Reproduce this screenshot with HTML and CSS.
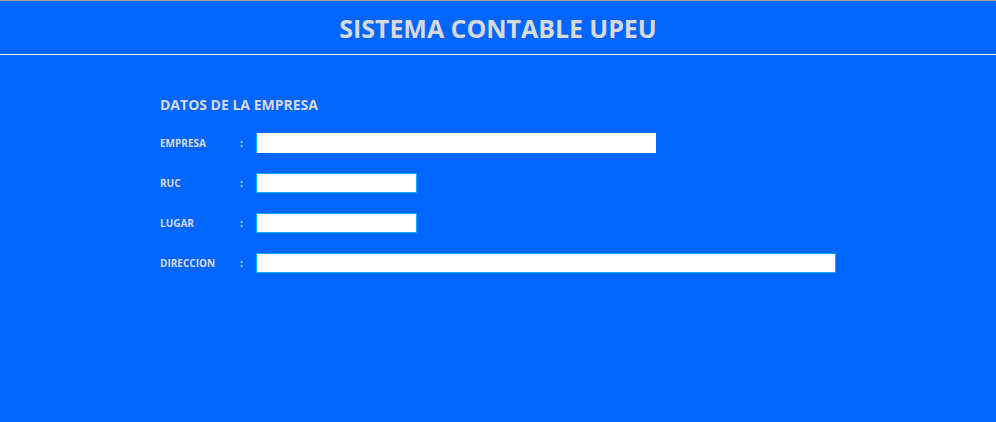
FILE: index.html
```html
<!DOCTYPE html>
<html lang="es">
<head>
<meta charset="utf-8">
<title>Sistema Contable UPEU</title>
<link rel="stylesheet" href="styles.css">
</head>
<body>
<header class="header">
  <h1 class="title">SISTEMA CONTABLE UPEU</h1>
</header>
<main class="content">
  <h2 class="section-title">DATOS DE LA EMPRESA</h2>
  <div class="form">
    <div class="row">
      <span class="label">EMPRESA</span><span class="colon">:</span>
      <div class="field field-empresa"></div>
    </div>
    <div class="row">
      <span class="label">RUC</span><span class="colon">:</span>
      <div class="field field-short"></div>
    </div>
    <div class="row">
      <span class="label">LUGAR</span><span class="colon">:</span>
      <div class="field field-short"></div>
    </div>
    <div class="row">
      <span class="label">DIRECCION</span><span class="colon">:</span>
      <div class="field field-long"></div>
    </div>
  </div>
</main>
</body>
</html>
```
FILE: styles.css
```css
html, body {
  margin: 0;
  padding: 0;
}
body {
  background: #0066ff;
  width: 996px;
  height: 422px;
  overflow: hidden;
  font-family: "Open Sans", "Liberation Sans", sans-serif;
  color: #d9d9d9;
  border-top: 1px solid #9a9ea6;
  box-sizing: border-box;
}
.header {
  height: 53px;
  border-bottom: 1px solid #f2f2f2;
  display: flex;
  align-items: center;
  justify-content: center;
}
.title {
  margin: 0;
  font-size: 25px;
  font-weight: 700;
  letter-spacing: -0.05px;
  color: #d9d9d9;
  line-height: 1;
  padding-top: 2px;
}
.content {
  padding: 41px 0 0 160px;
}
.section-title {
  margin: 0;
  font-size: 14px;
  font-weight: 700;
  line-height: 18px;
  color: #d9d9d9;
}
.form {
  display: flex;
  flex-direction: column;
  gap: 20px;
  margin-top: 19px;
}
.row {
  display: flex;
  align-items: center;
  height: 20px;
}
.label {
  width: 80px;
  font-size: 10px;
  font-weight: 700;
}
.colon {
  width: 16px;
  font-size: 10px;
  font-weight: 700;
}
.field {
  height: 20px;
  background: #ffffff;
  box-sizing: border-box;
  border: 1px solid #00b0f0;
}
.field-empresa {
  width: 400px;
  border: none;
  border-left: 1px solid #00b0f0;
}
.field-short {
  width: 161px;
}
.field-long {
  width: 580px;
}
```
